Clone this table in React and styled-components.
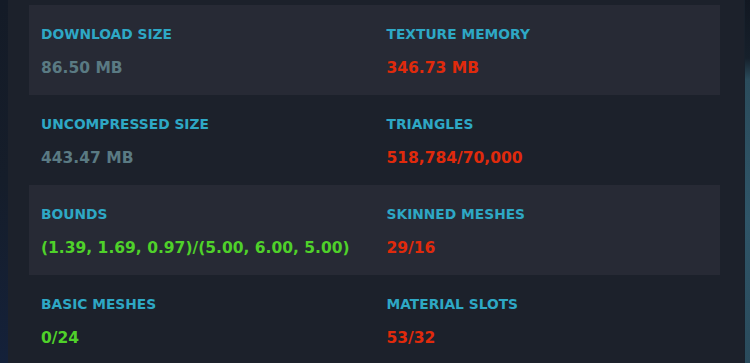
import React from "react";
import styled, { createGlobalStyle } from "styled-components";

const Global = createGlobalStyle`
  html, body { margin: 0; padding: 0; background: #1c212b; }
  body { font-family: "DejaVu Sans", "Noto Sans", sans-serif; }
`;

const Page = styled.div`
  display: flex;
  height: 363px;
  overflow: hidden;
  background: #1c212b;
`;

const LeftEdge = styled.div`
  width: 8px;
  flex: none;
  background: linear-gradient(180deg, #141b27 0%, #151d2a 50%, #14213a 100%);
`;

const RightEdge = styled.div`
  width: 5px;
  flex: none;
  border-left: 1px solid #18212c;
  background: linear-gradient(180deg, #121822 0%, #16202b 16%, #2b4c5c 22%, #2f5568 60%, #2a4b5c 100%);
`;

const Panel = styled.div`
  flex: 1;
  padding: 5px 24px 0 21px;
  background: #1c212b;
`;

const Row = styled.div`
  display: grid;
  grid-template-columns: 1fr 1fr;
  height: 90px;
  background: ${(p) => (p.$striped ? "#272a35" : "transparent")};
`;

const Cell = styled.div`
  padding: 17px 12px 0;
  display: flex;
  flex-direction: column;
`;

const Label = styled.div`
  font-size: 13.8px;
  font-weight: 700;
  line-height: 24px;
  color: #2ea8c5;
`;

const Value = styled.div`
  margin-top: 10px;
  font-size: 15.5px;
  font-weight: 700;
  line-height: 24px;
  color: ${(p) => p.$color};
`;

const GRAY = "#5a7a83";
const RED = "#e02a0c";
const GREEN = "#4fd12a";

const rows = [
  [
    { label: "DOWNLOAD SIZE", value: "86.50 MB", color: GRAY },
    { label: "TEXTURE MEMORY", value: "346.73 MB", color: RED },
  ],
  [
    { label: "UNCOMPRESSED SIZE", value: "443.47 MB", color: GRAY },
    { label: "TRIANGLES", value: "518,784/70,000", color: RED },
  ],
  [
    { label: "BOUNDS", value: "(1.39, 1.69, 0.97)/(5.00, 6.00, 5.00)", color: GREEN },
    { label: "SKINNED MESHES", value: "29/16", color: RED },
  ],
  [
    { label: "BASIC MESHES", value: "0/24", color: GREEN },
    { label: "MATERIAL SLOTS", value: "53/32", color: RED },
  ],
];

export default function App() {
  return (
    <>
      <Global />
      <Page>
        <LeftEdge />
        <Panel>
          {rows.map((r, i) => (
            <Row key={i} $striped={i % 2 === 0}>
              {r.map((c) => (
                <Cell key={c.label}>
                  <Label>{c.label}</Label>
                  <Value $color={c.color}>{c.value}</Value>
                </Cell>
              ))}
            </Row>
          ))}
        </Panel>
        <RightEdge />
      </Page>
    </>
  );
}
